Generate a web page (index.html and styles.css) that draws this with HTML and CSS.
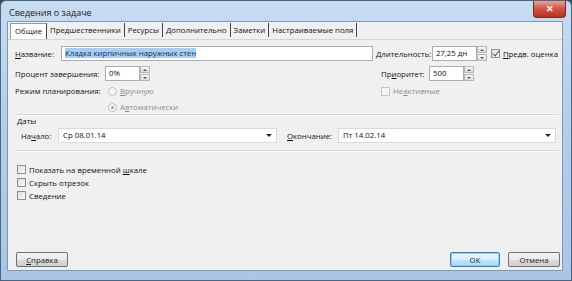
FILE: index.html
```html
<!DOCTYPE html>
<html lang="ru">
<head>
    <meta charset="UTF-8">
    <title>Сведения о задаче</title>
    <link rel="stylesheet" href="styles.css">
</head>
<body>
    <div class="window">
        <div class="titlebar">
            <span class="title">Сведения о задаче</span>
            <span class="close">&#x2715;</span>
        </div>
        <div class="client">
            <div class="tabs">
                <span class="tab active">Общие</span>
                <span class="tab">Предшественники</span>
                <span class="tab">Ресурсы</span>
                <span class="tab">Дополнительно</span>
                <span class="tab">Заметки</span>
                <span class="tab">Настраиваемые поля</span>
            </div>
            <div class="panel">
                <div class="row row-1">
                    <div class="left">
                        <label class="lbl lbl-name"><u>Н</u>азвание:</label>
                        <div class="field field-name"><span class="sel">Кладка кирпичных наружных стен</span></div>
                    </div>
                    <div class="right">
                        <label class="lbl lbl-dur"><u>Д</u>лительность:</label>
                        <div class="field field-dur">27,25 дн</div>
                        <div class="spin"><i class="up"></i><i class="down"></i></div>
                        <span class="check checked"></span>
                        <label class="lbl"><u>П</u>редв. оценка</label>
                    </div>
                </div>
                <div class="row row-2">
                    <div class="left">
                        <label class="lbl lbl-pct">Процент завершения:</label>
                        <div class="field field-pct">0%</div>
                        <div class="spin"><i class="up"></i><i class="down"></i></div>
                    </div>
                    <div class="right">
                        <label class="lbl lbl-prio">Пр<u>и</u>оритет:</label>
                        <div class="field field-prio">500</div>
                        <div class="spin"><i class="up"></i><i class="down"></i></div>
                    </div>
                </div>
                <div class="row row-3">
                    <div class="left">
                        <label class="lbl lbl-mode">Режим планирования:</label>
                        <span class="radio"></span>
                        <label class="lbl off"><u>В</u>ручную</label>
                    </div>
                    <div class="right">
                        <span class="check off-box"></span>
                        <label class="lbl off">Не<u>а</u>ктивные</label>
                    </div>
                </div>
                <div class="row row-4">
                    <span class="radio on"></span>
                    <label class="lbl off">А<u>в</u>томатически</label>
                </div>
                <div class="line"></div>
                <div class="group">Даты</div>
                <div class="row row-dates">
                    <label class="lbl lbl-start">На<u>ч</u>ало:</label>
                    <div class="combo combo-start">Ср 08.01.14<span class="arrow"></span></div>
                    <label class="lbl lbl-end"><u>О</u>кончание:</label>
                    <div class="combo combo-end">Пт 14.02.14<span class="arrow"></span></div>
                </div>
                <div class="line line-2"></div>
                <div class="checks">
                    <div class="crow"><span class="check"></span><label class="lbl">Показать на временной <u>ш</u>кале</label></div>
                    <div class="crow"><span class="check"></span><label class="lbl">Скрыть отрезок</label></div>
                    <div class="crow"><span class="check"></span><label class="lbl">Сведение</label></div>
                </div>
            </div>
            <div class="buttons">
                <button class="btn btn-help"><u>С</u>правка</button>
                <span class="spacer"></span>
                <button class="btn btn-ok">ОК</button>
                <button class="btn btn-cancel">Отмена</button>
            </div>
        </div>
    </div>
</body>
</html>
```

FILE: styles.css
```css
* {
    box-sizing: border-box;
}

body {
    margin: 0;
    width: 572px;
    height: 281px;
    overflow: hidden;
    background: #3c4a5a;
    font-family: "Open Sans", "Noto Sans", sans-serif;
    font-size: 7.8px;
    color: #111;
}

.window {
    width: 572px;
    height: 281px;
    padding: 0 8px 9px 6px;
    border: 1px solid #4d6580;
    border-radius: 6px 6px 0 0;
    background: linear-gradient(to bottom, #c7dcf1 0%, #b5cfea 40%, #a9c6e6 100%);
    display: flex;
    flex-direction: column;
}

.titlebar {
    height: 20px;
    display: flex;
    align-items: flex-start;
}

.title {
    margin: 5px 0 0 2px;
    font-size: 9px;
    color: #1b1b1b;
}

.close {
    margin-left: auto;
    margin-right: -3px;
    width: 33px;
    height: 17px;
    border: 1px solid #7a2a22;
    border-top: none;
    border-radius: 0 0 4px 4px;
    background: linear-gradient(to bottom, #e9a498 0%, #d2584a 45%, #b8301f 100%);
    color: #fff;
    font-size: 9px;
    font-weight: bold;
    text-align: center;
    line-height: 16px;
}

.client {
    flex: 1;
    background: #f0f0f0;
    border: 1px solid #7d99b8;
    display: flex;
    flex-direction: column;
}

.tabs {
    height: 16px;
    margin-top: 1px;
    padding-left: 2px;
    display: flex;
    align-items: stretch;
}

.tab {
    padding: 0 3px;
    line-height: 14px;
    border-right: 1px solid #444;
    margin-bottom: 2px;
}

.tab.active {
    background: #fff;
    border: 1px solid #9a9a9a;
    border-bottom: none;
    border-right: 1px solid #444;
    margin-bottom: 0;
    padding: 0 4px;
}

.panel {
    border-top: 1px solid #d4d4d4;
    padding: 0 4px 0 7px;
}

.row {
    display: flex;
    align-items: center;
}

.left {
    width: 366px;
    display: flex;
    align-items: center;
}

.right {
    display: flex;
    align-items: center;
}

.lbl {
    white-space: nowrap;
}

.off {
    color: #8d8d8d;
}

.field {
    height: 15px;
    background: #fff;
    border: 1px solid #abadb3;
    padding: 0 3px;
    line-height: 13px;
    white-space: nowrap;
    overflow: hidden;
}

.sel {
    background: #a6cdf3;
    color: #13305d;
}

.row-1 {
    margin-top: 6px;
}

.lbl-name {
    width: 46px;
}

.field-name {
    width: 312px;
}

.lbl-dur {
    width: 56px;
}

.field-dur {
    width: 45px;
}

.spin {
    width: 10px;
    height: 15px;
    display: flex;
    flex-direction: column;
    gap: 1px;
    margin-right: 4px;
}

.spin i {
    flex: 1;
    background: linear-gradient(to bottom, #f7f7f7, #dcdcdc);
    border: 1px solid #b7b7b7;
    position: relative;
}

.spin i::after {
    content: "";
    position: absolute;
    left: 2px;
    top: 2px;
    border-left: 2px solid transparent;
    border-right: 2px solid transparent;
}

.spin .up::after {
    border-bottom: 2px solid #5a5a5a;
}

.spin .down::after {
    border-top: 2px solid #5a5a5a;
}

.check {
    width: 9px;
    height: 9px;
    border: 1px solid #8e8f8f;
    background: linear-gradient(135deg, #dedede, #fbfbfb);
    margin-right: 3px;
    flex: none;
    position: relative;
}

.check.checked::after {
    content: "";
    position: absolute;
    left: 2px;
    top: -1px;
    width: 3px;
    height: 6px;
    border-right: 1.5px solid #3a5a8a;
    border-bottom: 1.5px solid #3a5a8a;
    transform: rotate(40deg);
}

.check.off-box {
    border-color: #c4c4c4;
    background: #f4f4f4;
}

.row-2 {
    margin-top: 5px;
}

.lbl-pct {
    width: 90px;
}

.field-pct {
    width: 35px;
}

.lbl-prio {
    width: 48px;
}

.field-prio {
    width: 35px;
}

.row-3 {
    margin-top: 4px;
    height: 12px;
}

.lbl-mode {
    width: 93px;
}

.radio {
    width: 9px;
    height: 9px;
    border-radius: 50%;
    border: 1px solid #c2c2c2;
    background: #f5f5f5;
    margin-right: 3px;
    flex: none;
    position: relative;
}

.radio.on::after {
    content: "";
    position: absolute;
    left: 2px;
    top: 2px;
    width: 3px;
    height: 3px;
    border-radius: 50%;
    background: #a5a5a5;
}

.row-4 {
    margin-top: 4px;
    height: 12px;
    padding-left: 93px;
}

.line {
    margin-top: 1px;
    background: #d6d6d6;
    border-bottom: 1px solid #fff;
    height: 2px;
}

.group {
    margin: 0 0 0 2px;
    line-height: 11px;
}

.row-dates {
    margin-top: 1px;
    padding-left: 6px;
}

.lbl-start {
    width: 37px;
}

.combo {
    height: 15px;
    background: #fff;
    border: 1px solid #d9d9d9;
    padding: 0 4px;
    line-height: 13px;
    display: flex;
    align-items: center;
}

.arrow {
    margin-left: auto;
    border-left: 3px solid transparent;
    border-right: 3px solid transparent;
    border-top: 3px solid #222;
}

.combo-start {
    width: 219px;
    margin-right: 10px;
}

.lbl-end {
    width: 51px;
}

.combo-end {
    width: 218px;
}

.line-2 {
    margin-top: 7px;
}

.checks {
    margin-top: 11px;
    padding-left: 2px;
}

.crow {
    height: 13px;
    display: flex;
    align-items: center;
}

.buttons {
    margin-top: auto;
    padding: 0 2px 3px 8px;
    display: flex;
    gap: 8px;
}

.spacer {
    flex: 1;
}

.btn {
    height: 15px;
    padding: 0;
    font: inherit;
    color: #1e1e1e;
    border: 1px solid #707070;
    border-radius: 2px;
    background: linear-gradient(to bottom, #f2f2f2 0%, #ebebeb 50%, #dddddd 51%, #cfcfcf 100%);
}

.btn-help {
    width: 52px;
}

.btn-ok {
    width: 50px;
    border-color: #3c7fb1;
    background: linear-gradient(to bottom, #eaf6fd 0%, #d9f0fc 50%, #bee6fd 51%, #a7d9f5 100%);
    box-shadow: inset 0 0 0 1px #8fd0f7;
}

.btn-cancel {
    width: 52px;
}
```
